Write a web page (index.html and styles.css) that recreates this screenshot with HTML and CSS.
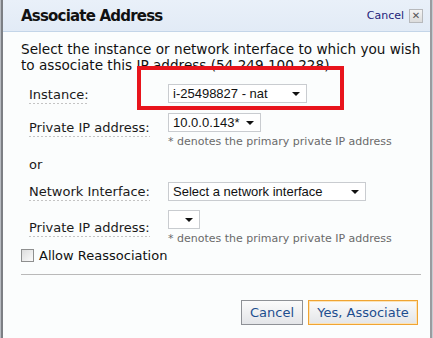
FILE: index.html
```html
<!DOCTYPE html>
<html>
<head>
<meta charset="utf-8">
<link rel="stylesheet" href="styles.css">
</head>
<body>
<div class="dialog">
  <div class="header">
    <h1 class="title">Associate Address</h1>
    <div class="close">
      <span class="close-link">Cancel</span>
      <span class="close-x">✕</span>
    </div>
  </div>
  <div class="body">
    <p class="intro">Select the instance or network interface to which you wish to associate this IP address (54.249.100.228)</p>
    <div class="form">
      <div class="row row-instance">
        <span class="label">Instance:</span>
        <div class="field">
          <div class="select sel-instance"><span>i-25498827 - nat</span><i class="arrow"></i></div>
        </div>
        <div class="highlight"></div>
      </div>
      <div class="row row-ip">
        <span class="label">Private IP address:</span>
        <div class="field">
          <div class="select sel-ip"><span>10.0.0.143*</span><i class="arrow"></i></div>
          <div class="note">* denotes the primary private IP address</div>
        </div>
      </div>
      <div class="or">or</div>
      <div class="row row-ni">
        <span class="label">Network Interface:</span>
        <div class="field">
          <div class="select sel-ni"><span>Select a network interface</span><i class="arrow"></i></div>
        </div>
      </div>
      <div class="row row-ip2">
        <span class="label">Private IP address:</span>
        <div class="field">
          <div class="select sel-empty"><span></span><i class="arrow"></i></div>
          <div class="note">* denotes the primary private IP address</div>
        </div>
      </div>
    </div>
    <label class="check"><span class="box"></span><span>Allow Reassociation</span></label>
    <div class="sep"></div>
    <div class="buttons">
      <span class="btn btn-cancel">Cancel</span>
      <span class="btn btn-primary">Yes, Associate</span>
    </div>
  </div>
</div>
</body>
</html>
```
FILE: styles.css
```css
html, body {
  margin: 0;
  padding: 0;
  background: #ffffff;
}
body {
  width: 433px;
  height: 338px;
  overflow: hidden;
  font-family: "DejaVu Sans", Verdana, sans-serif;
  font-size: 13px;
  color: #1a1a1a;
}
.dialog {
  width: 427px;
  height: 345px;
  margin-left: 1px;
  border-left: 2px solid #7c7f84;
  border-right: 2px solid #9a9ca0;
  border-bottom: 2px solid #7c7f84;
  border-radius: 0 0 6px 6px;
  background: #fbfdfd;
  box-shadow: -1px 0 0 #b8bcc2, 1px 0 0 #c8ccd2;
}
.header {
  height: 31px;
  background: linear-gradient(#e9f0f9, #e2ebf6);
  border-bottom: 1px solid #c3d5e8;
  display: flex;
  align-items: center;
  justify-content: space-between;
  padding: 0 7px 0 18px;
}
.title {
  margin: 0;
  font-size: 15px;
  font-weight: bold;
  color: #111;
  letter-spacing: -0.8px;
}
.close {
  display: flex;
  align-items: center;
  gap: 5px;
}
.close-link {
  font-size: 11px;
  color: #1d1e7a;
}
.close-x {
  width: 12px;
  height: 12px;
  border: 1px solid #b7b9bc;
  background: linear-gradient(#f4f4f4, #dcdcdc);
  font-size: 10px;
  line-height: 12px;
  text-align: center;
  color: #555;
  font-weight: bold;
}
.body {
  padding: 9px 2px 0 18px;
}
.intro {
  margin: 0;
  font-size: 13.6px;
  line-height: 16px;
  color: #111;
}
.form {
  padding-left: 8px;
  margin-top: 11px;
}
.row {
  display: flex;
  align-items: flex-start;
  position: relative;
}
.label {
  display: block;
  flex: none;
  color: #1a1a1a;
  background-image: linear-gradient(to right, #c4c4c4 50%, transparent 50%);
  background-size: 4px 1px;
  background-repeat: repeat-x;
  background-position: 0 100%;
  padding-bottom: 2px;
}
.field {
  display: flex;
  flex-direction: column;
  position: absolute;
  left: 139px;
  top: 0;
}
.select {
  box-sizing: border-box;
  height: 19px;
  border: 1px solid #c9ccd0;
  background: #fff;
  display: flex;
  align-items: center;
  justify-content: space-between;
  padding: 0 6px 0 4px;
  font-family: "Liberation Sans", Arial, sans-serif;
  font-size: 13px;
  color: #111;
}
.arrow {
  width: 0;
  height: 0;
  border-left: 4px solid transparent;
  border-right: 4px solid transparent;
  border-top: 4px solid #111;
}
.note {
  font-size: 11px;
  color: #6a6a6a;
  margin-top: 3px;
}
.row-instance {
  margin-top: 11px;
  height: 19px;
}
.row-instance .label {
  margin-top: 3px;
}
.sel-instance { width: 139px; }
.highlight {
  position: absolute;
  left: 108px;
  top: -18px;
  width: 199px;
  height: 36px;
  border: 4px solid #e8141c;
}
.row-ip {
  margin-top: 10px;
  height: 35px;
}
.row-ip .label {
  margin-top: 7px;
}
.sel-ip { width: 93px; }
.or {
  margin-top: 9px;
}
.row-ni {
  margin-top: 10px;
  height: 19px;
}
.row-ni .label {
  margin-top: 2px;
}
.sel-ni { width: 198px; }
.row-ip2 {
  margin-top: 9px;
  height: 35px;
}
.row-ip2 .label {
  margin-top: 10px;
}
.sel-empty { width: 32px; }
.check {
  display: flex;
  align-items: center;
  gap: 5px;
  margin-top: 3px;
  color: #111;
}
.box {
  box-sizing: border-box;
  width: 13px;
  height: 13px;
  border: 1px solid #8e8f8f;
  background: linear-gradient(135deg, #dcdcdc, #fbfbfb);
}
.sep {
  margin-top: 11px;
  height: 1px;
  background: #b9b9b9;
  width: 400px;
}
.buttons {
  display: flex;
  justify-content: flex-end;
  gap: 5px;
  margin-top: 25px;
  width: 397px;
}
.btn {
  box-sizing: border-box;
  height: 25px;
  border: 1px solid #8e9196;
  background: linear-gradient(#fbfbfb, #e3e5e8);
  color: #1d4e8f;
  display: flex;
  align-items: center;
  justify-content: center;
  font-size: 13px;
}
.btn-cancel { width: 62px; }
.btn-primary {
  border-color: #f0a432;
  width: 110px;
  box-shadow: inset 0 0 0 1px #fbe3b8;
}
```
